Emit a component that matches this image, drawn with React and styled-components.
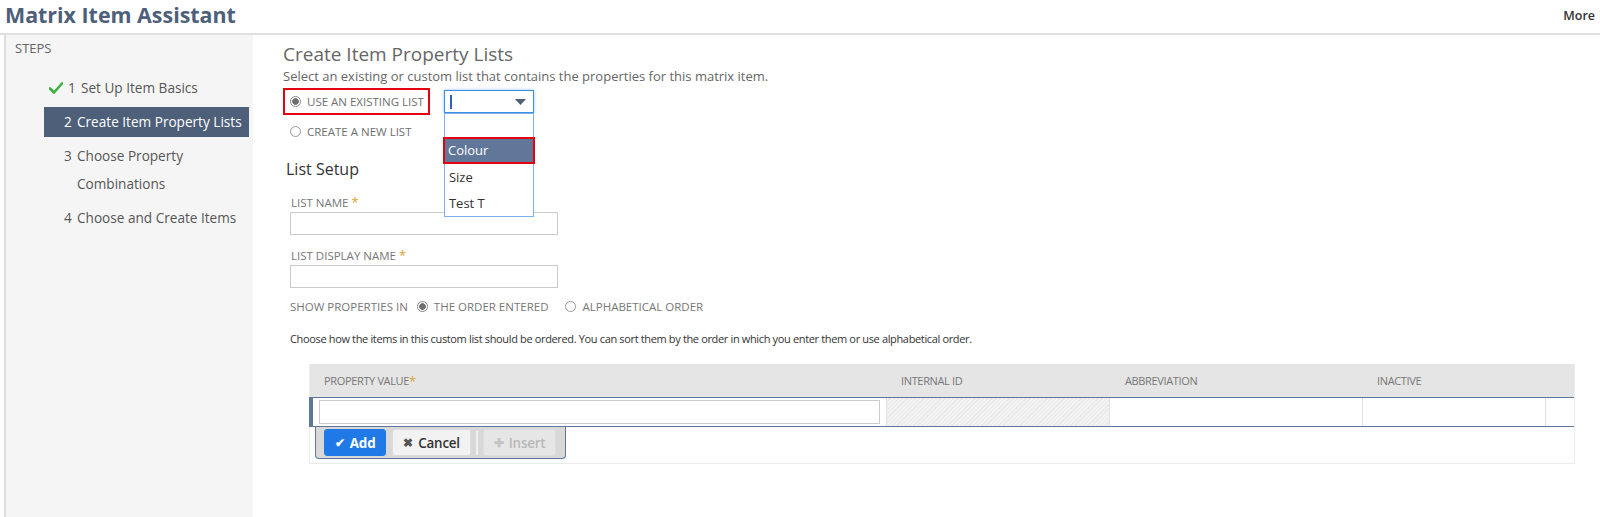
import React from 'react';
import styled, { createGlobalStyle } from 'styled-components';

const steps = [
  { num: 1, label: 'Set Up Item Basics', done: true },
  { num: 2, label: 'Create Item Property Lists', active: true },
  { num: 3, label: 'Choose Property Combinations' },
  { num: 4, label: 'Choose and Create Items' },
];

const listOptions = ['', 'Colour', 'Size', 'Test T'];

const CheckMark = () => (
  <svg width="14" height="12" viewBox="0 0 14 12">
    <path d="M1 6.5 L5 10.5 L13 1.5" fill="none" stroke="#3bb33b" strokeWidth="2.6" strokeLinecap="round" strokeLinejoin="round" />
  </svg>
);

const App = () => {
  return (
    <Page>
      <GlobalStyle />
      <TopBar>
        <Title>Matrix Item Assistant</Title>
        <MoreLink>More</MoreLink>
      </TopBar>
      <Body>
        <Sidebar>
          <StepsLabel>STEPS</StepsLabel>
          <StepList>
            {steps.map((s) => (
              <Step key={s.num} $active={s.active} $done={s.done}>
                {s.done && (
                  <CheckWrap>
                    <CheckMark />
                  </CheckWrap>
                )}
                <StepNum>{s.num}</StepNum>
                <span>{s.label}</span>
              </Step>
            ))}
          </StepList>
        </Sidebar>

        <Main>
          <Heading>Create Item Property Lists</Heading>
          <Subtitle>
            Select an existing or custom list that contains the properties for this matrix item.
          </Subtitle>

          <ChoiceRow>
            <RadioLabel $flagged>
              <Radio $checked />
              USE AN EXISTING LIST
            </RadioLabel>
            <SelectWrap>
              <SelectBox>
                <Caret />
                <svg width="11" height="6" viewBox="0 0 11 6">
                  <polygon points="0,0 11,0 5.5,6" fill="#4d5f79" />
                </svg>
              </SelectBox>
              <OptionMenu>
                {listOptions.map((o) => (
                  <OptionItem key={o || 'blank'} $selected={o === 'Colour'}>
                    {o}
                  </OptionItem>
                ))}
              </OptionMenu>
            </SelectWrap>
          </ChoiceRow>
          <ChoiceRow>
            <RadioLabel>
              <Radio />
              CREATE A NEW LIST
            </RadioLabel>
          </ChoiceRow>

          <SectionTitle>List Setup</SectionTitle>
          <FieldLabel>
            LIST NAME <Req>*</Req>
          </FieldLabel>
          <TextInput />
          <FieldLabel>
            LIST DISPLAY NAME <Req>*</Req>
          </FieldLabel>
          <TextInput />

          <OrderRow>
            <span>SHOW PROPERTIES IN</span>
            <OrderOption>
              <Radio $checked />
              THE ORDER ENTERED
            </OrderOption>
            <OrderOption>
              <Radio />
              ALPHABETICAL ORDER
            </OrderOption>
          </OrderRow>

          <HelpText>
            Choose how the items in this custom list should be ordered. You can sort them by the order in which you
            enter them or use alphabetical order.
          </HelpText>

          <Table>
            <HeaderRow>
              <HeadCell>
                PROPERTY VALUE<Req>*</Req>
              </HeadCell>
              <HeadCell>INTERNAL ID</HeadCell>
              <HeadCell>ABBREVIATION</HeadCell>
              <HeadCell>INACTIVE</HeadCell>
              <HeadCell />
            </HeaderRow>
            <EditRow>
              <Cell $first>
                <CellInput />
              </Cell>
              <Cell $hatched />
              <Cell />
              <Cell $divided />
              <Cell $divided />
            </EditRow>
            <ButtonBar>
              <ActionButton $primary>
                <span>✔</span> Add
              </ActionButton>
              <ActionButton>
                <span>✖</span> Cancel
              </ActionButton>
              <BarDivider />
              <ActionButton $disabled>
                <span>✚</span> Insert
              </ActionButton>
            </ButtonBar>
          </Table>
        </Main>
      </Body>
    </Page>
  );
};

export default App;

const GlobalStyle = createGlobalStyle`
  body {
    margin: 0;
    background: #fff;
    font-family: "Open Sans", "Liberation Sans", sans-serif;
  }
`;

const Page = styled.div`
  width: 1600px;
  height: 517px;
  overflow: hidden;
  display: flex;
  flex-direction: column;
`;

const TopBar = styled.div`
  height: 33px;
  display: flex;
  justify-content: space-between;
  align-items: flex-start;
  padding: 0 5px;
  border-bottom: 2px solid #e0e0e0;
`;

const Title = styled.h1`
  margin: 0;
  font-size: 21.4px;
  line-height: 29px;
  font-weight: 700;
  color: #4d5f79;
`;

const MoreLink = styled.span`
  margin-top: 6px;
  font-size: 12.5px;
  line-height: 20px;
  font-weight: 600;
  color: #333;
`;

const Body = styled.div`
  flex: 1;
  display: flex;
`;

const Sidebar = styled.div`
  width: 247px;
  margin-left: 4px;
  border-left: 2px solid #ddd;
  background: #f5f5f5;
  padding-top: 4px;
`;

const StepsLabel = styled.div`
  padding-left: 9px;
  font-size: 13px;
  line-height: 18px;
  color: #666;
`;

const StepList = styled.div`
  margin-top: 16px;
  margin-left: 38px;
  width: 205px;
  display: flex;
  flex-direction: column;
  gap: 4px;
`;

const Step = styled.div`
  display: flex;
  padding: 1px 0 1px ${(p) => (p.$done ? '5px' : '20px')};
  font-size: 13.6px;
  line-height: 28px;
  color: ${(p) => (p.$active ? '#fff' : '#555')};
  background: ${(p) => (p.$active ? '#4d5f79' : 'transparent')};
  white-space: ${(p) => (p.$active ? 'nowrap' : 'normal')};
`;

const CheckWrap = styled.span`
  display: flex;
  align-items: center;
  margin-right: 5px;
`;

const StepNum = styled.span`
  flex: none;
  width: 13px;
`;

const Main = styled.div`
  flex: 1;
  position: relative;
  padding: 6px 25px 0 30px;
`;

const Heading = styled.h2`
  margin: 0;
  font-size: 19px;
  line-height: 26px;
  font-weight: 400;
  color: #666;
`;

const Subtitle = styled.div`
  font-size: 13px;
  line-height: 18px;
  color: #666;
`;

const ChoiceRow = styled.div`
  display: flex;
  align-items: center;
  margin-top: 3px;
  height: 27px;
`;

const RadioLabel = styled.label`
  display: flex;
  align-items: center;
  gap: 6px;
  height: 23px;
  padding: 0 4px 0 5px;
  border: 2px solid ${(p) => (p.$flagged ? '#e3000f' : 'transparent')};
  font-size: 11.5px;
  color: #6f6f6f;
`;

const Radio = styled.span`
  width: 11px;
  height: 11px;
  box-sizing: border-box;
  border-radius: 50%;
  border: 1px solid ${(p) => (p.$checked ? '#888' : '#999')};
  background: ${(p) => (p.$checked ? 'radial-gradient(circle, #6f6f6f 0 3px, #fff 3.6px)' : '#fff')};
  flex: none;
`;

const SelectWrap = styled.div`
  position: relative;
  margin-left: 14px;
`;

const SelectBox = styled.div`
  width: 90px;
  height: 23px;
  box-sizing: border-box;
  border: 1px solid #3a8ee6;
  box-shadow: 0 0 3px rgba(58, 142, 230, 0.5);
  display: flex;
  align-items: center;
  justify-content: space-between;
  padding: 0 7px 0 5px;
  background: #fff;
`;

const Caret = styled.span`
  width: 2px;
  height: 14px;
  background: #2f5fc0;
`;

const OptionMenu = styled.div`
  position: absolute;
  top: 100%;
  left: 0;
  width: 90px;
  box-sizing: border-box;
  border: 1px solid #7fb0ee;
  background: #fff;
  z-index: 2;
`;

const OptionItem = styled.div`
  height: ${(p) => (p.$selected ? '23px' : '26px')};
  line-height: ${(p) => (p.$selected ? '23px' : '26px')};
  padding-left: ${(p) => (p.$selected ? '3px' : '4px')};
  margin: ${(p) => (p.$selected ? '0 -2px' : '0')};
  font-size: 13px;
  color: ${(p) => (p.$selected ? '#fff' : '#333')};
  background: ${(p) => (p.$selected ? '#607799' : '#fff')};
  border: ${(p) => (p.$selected ? '2px solid #e3000f' : 'none')};
  &:first-child {
    height: 23px;
  }
`;

const SectionTitle = styled.div`
  margin-top: 13px;
  padding: 0 0 2px 3px;
  font-size: 16px;
  line-height: 22px;
  color: #333;
`;

const FieldLabel = styled.div`
  margin-top: 12px;
  padding-left: 8px;
  font-size: 11.5px;
  line-height: 16px;
  color: #777;
`;

const Req = styled.span`
  color: #e0a030;
  font-size: 13px;
`;

const TextInput = styled.div`
  margin: 1px 0 0 7px;
  width: 268px;
  height: 23px;
  box-sizing: border-box;
  border: 1px solid #ccc;
  background: #fff;
`;

const OrderRow = styled.div`
  display: flex;
  align-items: center;
  gap: 9px;
  margin-top: 10px;
  padding-left: 7px;
  height: 16px;
  font-size: 11.5px;
  color: #777;
`;

const OrderOption = styled.span`
  display: flex;
  align-items: center;
  gap: 6px;
  margin-right: 8px;
`;

const HelpText = styled.div`
  margin-top: 17px;
  padding-left: 7px;
  font-size: 11px;
  line-height: 16px;
  letter-spacing: -0.35px;
  color: #333;
`;

const Table = styled.div`
  margin: 17px 0 0 26px;
  height: 99px;
  border: 1px solid #ececec;
  border-top: none;
`;

const columns = '577px 224px 252px 183px 1fr';

const HeaderRow = styled.div`
  display: grid;
  grid-template-columns: ${columns};
  height: 33px;
  background: #e5e5e5;
`;

const HeadCell = styled.div`
  display: flex;
  align-items: center;
  padding-left: 14px;
  font-size: 11px;
  letter-spacing: -0.35px;
  color: #777;
`;

const EditRow = styled.div`
  display: grid;
  grid-template-columns: ${columns};
  height: 28px;
  border-top: 1px solid #607799;
  border-bottom: 1px solid #607799;
  margin-left: -1px;
`;

const Cell = styled.div`
  display: flex;
  align-items: center;
  padding: ${(p) => (p.$first ? '0 6px 0 6px' : '0')};
  border-left: ${(p) => (p.$first ? '4px solid #607799' : p.$divided ? '1px solid #e0e0e0' : 'none')};
  background: ${(p) =>
    p.$hatched ? 'repeating-linear-gradient(135deg, #f2f2f2 0 2px, #eaeaea 2px 3px)' : '#fff'};
  ${(p) => p.$hatched && 'border-left: 1px solid #e0e0e0; border-right: 1px solid #e0e0e0;'}
`;

const CellInput = styled.div`
  flex: 1;
  height: 24px;
  box-sizing: border-box;
  border: 1px solid #ccc;
  background: #fff;
`;

const ButtonBar = styled.div`
  display: inline-flex;
  align-items: center;
  gap: 6px;
  margin-left: 5px;
  height: 32px;
  box-sizing: border-box;
  padding: 0 9px 0 8px;
  background: #d8d8d8;
  border: 1px solid #607799;
  border-top: none;
  border-radius: 0 0 4px 4px;
`;

const ActionButton = styled.span`
  display: inline-flex;
  align-items: center;
  gap: 5px;
  height: 27px;
  box-sizing: border-box;
  padding: 0 10px;
  border-radius: 3px;
  font-size: 13.4px;
  letter-spacing: -0.2px;
  font-weight: ${(p) => (p.$primary ? 700 : 600)};
  border: 1px solid ${(p) => (p.$primary ? '#1f7ae8' : '#ddd')};
  background: ${(p) => (p.$primary ? '#1f7ae8' : p.$disabled ? '#e6e6e6' : '#f2f2f2')};
  color: ${(p) => (p.$primary ? '#fff' : p.$disabled ? '#b8b8b8' : '#333')};
  span {
    font-size: 12px;
    color: ${(p) => (p.$primary ? '#fff' : p.$disabled ? '#c4c4c4' : '#555')};
  }
`;

const BarDivider = styled.span`
  width: 2px;
  height: 24px;
  margin: 0 -1px;
  background: #f0f0f0;
`;
